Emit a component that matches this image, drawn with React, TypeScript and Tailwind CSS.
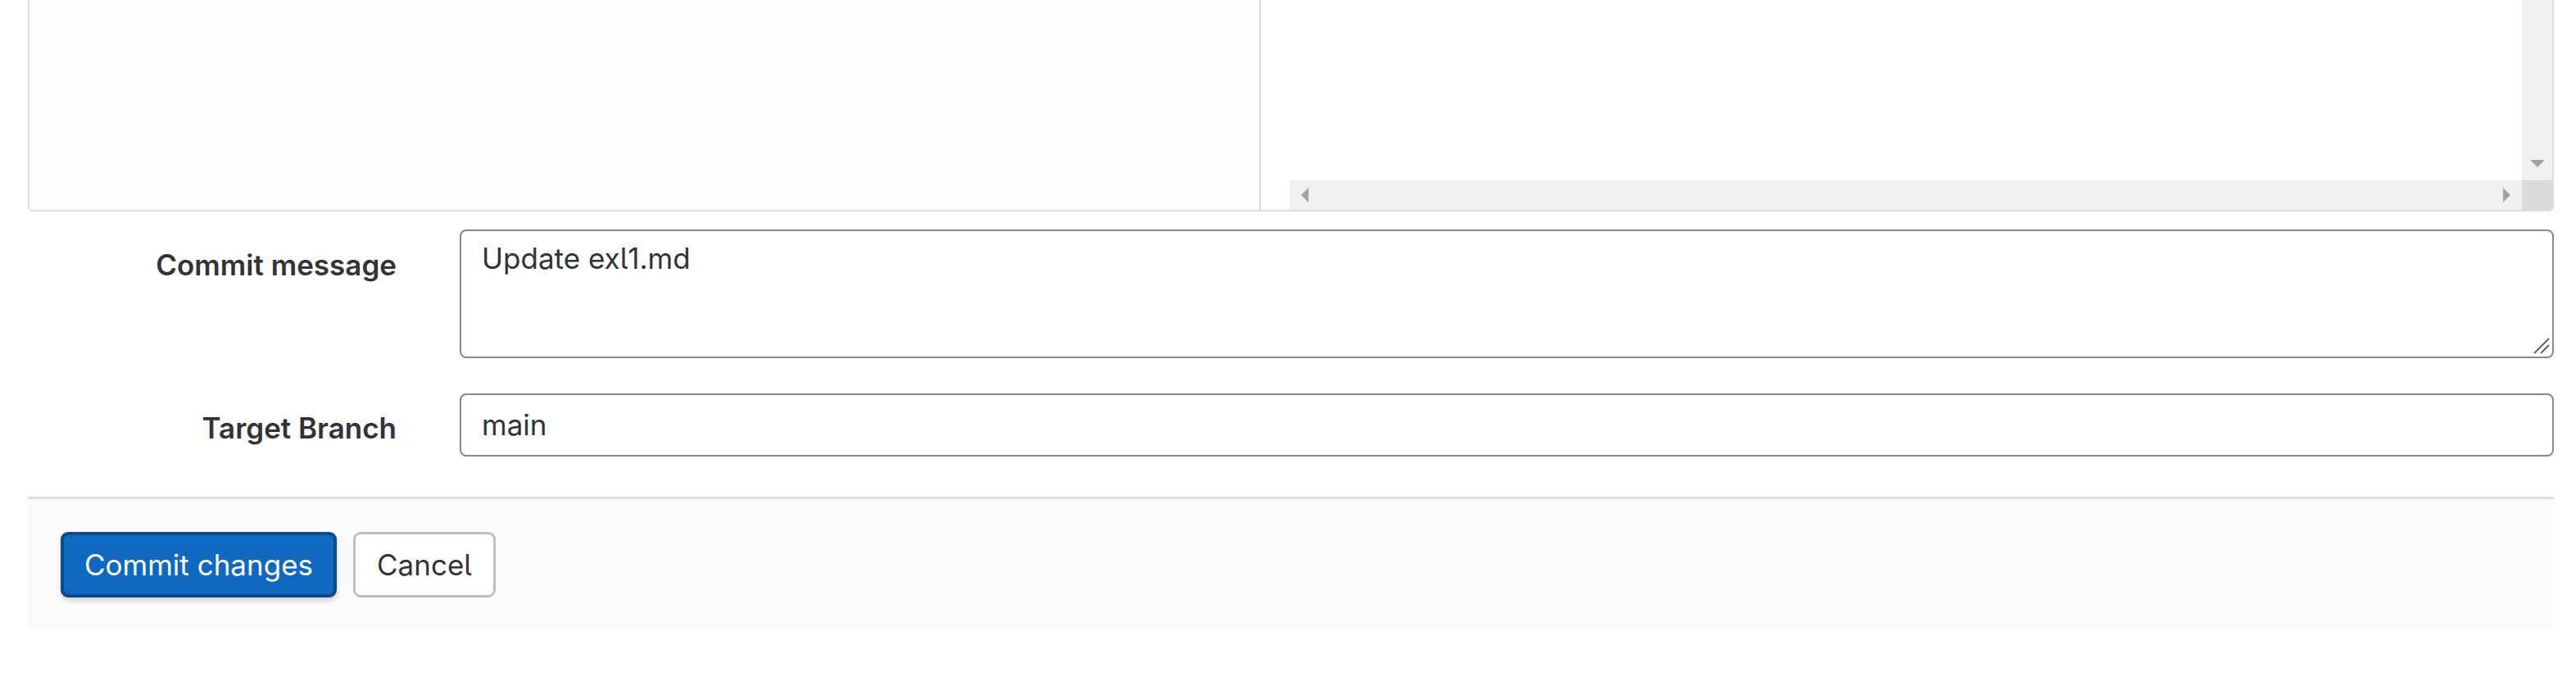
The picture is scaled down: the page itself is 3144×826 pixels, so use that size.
const font = "font-['Inter','Noto_Sans',sans-serif] [font-feature-settings:'cv05']";

const Arrow = ({ dir }: { dir: "left" | "right" | "down" }) => {
  const pts =
    dir === "left" ? "9,0 9,18 0,9" : dir === "right" ? "0,0 9,9 0,18" : "0,0 18,0 9,9";
  const w = dir === "down" ? 18 : 9;
  const h = dir === "down" ? 9 : 18;
  return (
    <svg width={w} height={h} viewBox={`0 0 ${w} ${h}`} className="block">
      <polygon points={pts} fill="#a3a3a3" />
    </svg>
  );
};

const Editor = () => (
  <div className="flex h-[258px] rounded-b-[6px] border-x-2 border-b-2 border-[#dcdcde] overflow-hidden">
    <div className="w-[1503px] bg-[#fefefd] border-r-2 border-[#dcdcde]" />
    <div className="flex flex-1 flex-col bg-white">
      <div className="flex flex-1">
        <div className="flex-1" />
        <div className="flex w-[37px] flex-col items-center justify-end bg-[#f0f0f0] pb-[16px]">
          <Arrow dir="down" />
        </div>
      </div>
      <div className="flex h-[36px]">
        <div className="w-[35px] bg-white" />
        <div className="flex flex-1 items-center justify-between bg-[#f0f0f0] px-[14px]">
          <Arrow dir="left" />
          <Arrow dir="right" />
        </div>
        <div className="w-[37px] bg-[#dcdcdc]" />
      </div>
    </div>
  </div>
);

const ResizeHandle = () => (
  <svg
    width="22"
    height="22"
    viewBox="0 0 22 22"
    className="absolute bottom-[2px] right-[2px]"
  >
    <line x1="2" y1="20" x2="20" y2="2" stroke="#606060" strokeWidth="2" />
    <line x1="10" y1="20" x2="20" y2="10" stroke="#606060" strokeWidth="2" />
  </svg>
);

const FormRow = ({
  label,
  children,
  labelPad,
}: {
  label: string;
  children: React.ReactNode;
  labelPad: string;
}) => (
  <div className="flex items-start">
    <div
      className={`w-[450px] shrink-0 text-right text-[35px] leading-[51px] font-semibold text-[#333238] ${labelPad}`}
    >
      {label}
    </div>
    <div className="ml-[77px] flex-1">{children}</div>
  </div>
);

export default function App() {
  return (
    <div className={`min-h-[826px] w-full bg-white pl-[34px] pr-[27px] ${font}`}>
      <Editor />

      <div className="mt-[22px]">
        <FormRow label="Commit message" labelPad="pt-[18px]">
          <div className="relative h-[157px] rounded-[8px] border-[2.5px] border-[#89888d] bg-white px-[25px] pt-[8px] text-[35px] leading-[51px] text-[#333238]">
            Update exl1.md
            <ResizeHandle />
          </div>
        </FormRow>
      </div>

      <div className="mt-[43px]">
        <FormRow label="Target Branch" labelPad="pt-[17px]">
          <div className="flex h-[77px] items-center rounded-[8px] border-[2.5px] border-[#89888d] bg-white px-[25px] text-[35px] text-[#333238]">
            main
          </div>
        </FormRow>
      </div>

      <div className="mt-[49px] border-t-[3px] border-[#dcdcde] bg-[#fbfafd] px-[40px] pt-[40px] pb-[39px]">
        <div className="flex items-center gap-[20px]">
          <button className="h-[80px] rounded-[9px] border-[4px] border-[#0b4a8b] bg-[#1068bf] px-[25px] text-[35px] text-white shadow-[0_4px_6px_rgba(0,0,0,0.15)]">
            Commit changes
          </button>
          <button className="h-[80px] rounded-[9px] border-[3px] border-[#bfbfc3] bg-white px-[26px] text-[35px] text-[#333238]">
            Cancel
          </button>
        </div>
      </div>
    </div>
  );
}
